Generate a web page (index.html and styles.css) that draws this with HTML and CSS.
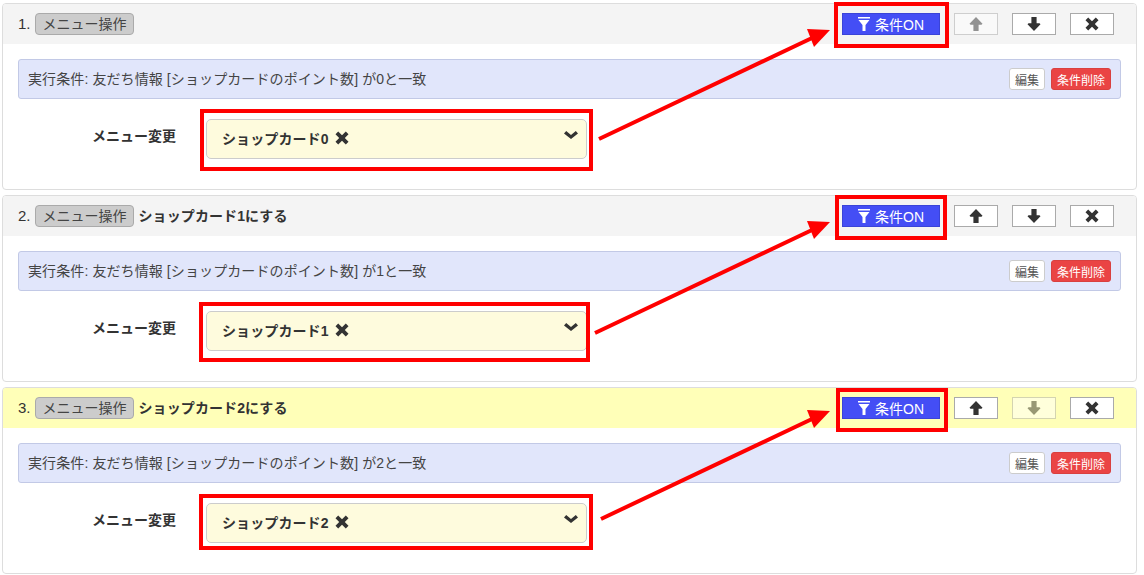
FILE: index.html
```html
<!DOCTYPE html>
<html lang="ja">
<head>
    <meta charset="UTF-8">
    <meta name="viewport" content="width=device-width, initial-scale=1.0">
    <title>アクション設定</title>
    <link rel="stylesheet" href="styles.css">
</head>
<body>
    <svg class="icon-defs" width="0" height="0">
        <symbol id="i-filter" viewBox="0 0 12 14"><path d="M0 0h12v1.500H0zM.5 3h11L7.500 8V14H4.500V8z"/></symbol>
        <symbol id="i-up" viewBox="0 0 14 14"><path d="M7 0l6.500 6.800-1 1H9.600V14H4.400V7.800H1.500l-1-1z"/></symbol>
        <symbol id="i-down" viewBox="0 0 14 14"><path d="M7 14L.5 7.200l1-1h2.900V0h5.200v6.200h2.900l1 1z"/></symbol>
        <symbol id="i-x" viewBox="0 0 14 14"><path d="M3.200 .5L7 4.200 10.800 .5 13.500 3.200 9.800 7 13.500 10.800 10.800 13.500 7 9.800 3.200 13.500 .5 10.800 4.200 7 .5 3.200z"/></symbol>
        <symbol id="i-chevron" viewBox="0 0 14 8"><path d="M2.200 0L7 4 11.800 0 14 2.400 7 8 0 2.400z"/></symbol>
    </svg>

    <div class="action-list">
        <section class="card">
            <header class="card-head">
                <div class="head-title">
                    <span class="head-no">1.</span>
                    <span class="badge">メニュー操作</span>
                </div>
                <div class="head-tools">
                    <button class="btn-cond"><svg class="ic ic-filter"><use href="#i-filter"/></svg><span class="cond-label">条件ON</span></button>
                    <button class="btn-tool" disabled><svg class="ic"><use href="#i-up"/></svg></button>
                    <button class="btn-tool"><svg class="ic"><use href="#i-down"/></svg></button>
                    <button class="btn-tool"><svg class="ic"><use href="#i-x"/></svg></button>
                </div>
            </header>
            <div class="card-body">
                <div class="cond-bar">
                    <span class="cond-text">実行条件: 友だち情報 [ショップカードのポイント数] が0と一致</span>
                    <div class="cond-tools">
                        <button class="btn-edit">編集</button>
                        <button class="btn-del">条件削除</button>
                    </div>
                </div>
                <div class="form-row">
                    <label class="form-label">メニュー変更</label>
                    <div class="select-box">
                        <span class="select-value">ショップカード0<svg class="ic ic-clear"><use href="#i-x"/></svg></span>
                        <svg class="ic-chevron"><use href="#i-chevron"/></svg>
                    </div>
                </div>
            </div>
        </section>

        <section class="card">
            <header class="card-head">
                <div class="head-title">
                    <span class="head-no">2.</span>
                    <span class="badge">メニュー操作</span>
                    <b class="head-name">ショップカード1にする</b>
                </div>
                <div class="head-tools">
                    <button class="btn-cond"><svg class="ic ic-filter"><use href="#i-filter"/></svg><span class="cond-label">条件ON</span></button>
                    <button class="btn-tool"><svg class="ic"><use href="#i-up"/></svg></button>
                    <button class="btn-tool"><svg class="ic"><use href="#i-down"/></svg></button>
                    <button class="btn-tool"><svg class="ic"><use href="#i-x"/></svg></button>
                </div>
            </header>
            <div class="card-body">
                <div class="cond-bar">
                    <span class="cond-text">実行条件: 友だち情報 [ショップカードのポイント数] が1と一致</span>
                    <div class="cond-tools">
                        <button class="btn-edit">編集</button>
                        <button class="btn-del">条件削除</button>
                    </div>
                </div>
                <div class="form-row">
                    <label class="form-label">メニュー変更</label>
                    <div class="select-box">
                        <span class="select-value">ショップカード1<svg class="ic ic-clear"><use href="#i-x"/></svg></span>
                        <svg class="ic-chevron"><use href="#i-chevron"/></svg>
                    </div>
                </div>
            </div>
        </section>

        <section class="card card-active">
            <header class="card-head">
                <div class="head-title">
                    <span class="head-no">3.</span>
                    <span class="badge">メニュー操作</span>
                    <b class="head-name">ショップカード2にする</b>
                </div>
                <div class="head-tools">
                    <button class="btn-cond"><svg class="ic ic-filter"><use href="#i-filter"/></svg><span class="cond-label">条件ON</span></button>
                    <button class="btn-tool"><svg class="ic"><use href="#i-up"/></svg></button>
                    <button class="btn-tool" disabled><svg class="ic"><use href="#i-down"/></svg></button>
                    <button class="btn-tool"><svg class="ic"><use href="#i-x"/></svg></button>
                </div>
            </header>
            <div class="card-body">
                <div class="cond-bar">
                    <span class="cond-text">実行条件: 友だち情報 [ショップカードのポイント数] が2と一致</span>
                    <div class="cond-tools">
                        <button class="btn-edit">編集</button>
                        <button class="btn-del">条件削除</button>
                    </div>
                </div>
                <div class="form-row">
                    <label class="form-label">メニュー変更</label>
                    <div class="select-box">
                        <span class="select-value">ショップカード2<svg class="ic ic-clear"><use href="#i-x"/></svg></span>
                        <svg class="ic-chevron"><use href="#i-chevron"/></svg>
                    </div>
                </div>
            </div>
        </section>
    </div>

    <!-- red annotations drawn on top of the screenshot -->
    <svg class="marks" width="1144" height="575" viewBox="0 0 1144 575">
        <g fill="none" stroke="#f00" stroke-width="4">
            <rect x="202" y="111" width="389" height="58"/>
            <rect x="836" y="4" width="111" height="42"/>
            <rect x="201" y="304" width="387" height="56"/>
            <rect x="837" y="197" width="108" height="41"/>
            <rect x="201" y="496" width="390" height="52"/>
            <rect x="838" y="390" width="108" height="40"/>
            <path d="M599 139L812 38M595 333L812 230M601 519L812 419"/>
        </g>
        <g fill="#f00">
            <path d="M830 30L807 29 L814 47z"/>
            <path d="M830 222L807 221 L814 239z"/>
            <path d="M830 411L807 410 L814 428z"/>
        </g>
    </svg>
</body>
</html>
```

FILE: styles.css
```css
* {
    box-sizing: border-box;
}

body {
    margin: 0;
    font-family: "Liberation Sans", "Noto Sans CJK JP", sans-serif;
    font-size: 14px;
    color: #333;
    background: #fff;
}

.icon-defs {
    position: absolute;
}

.marks {
    position: absolute;
    top: 0;
    left: 0;
    pointer-events: none;
}

.action-list {
    display: flex;
    flex-direction: column;
    gap: 5px;
    padding: 3px 7px 0 2px;
}

.card {
    height: 187px;
    border: 1px solid #ddd;
    border-radius: 4px;
    overflow: hidden;
    background: #fff;
}

.card-head {
    display: flex;
    justify-content: space-between;
    align-items: center;
    height: 40px;
    padding: 0 22px 0 15px;
    background: #f4f4f4;
}

.card-active .card-head {
    background: #ffffb8;
}

.head-title {
    display: flex;
    align-items: center;
    gap: 4px;
    margin-top: -1px;
}

.head-no {
    font-size: 15px;
}

.head-name {
    margin: -2px 0 0 1px;
    letter-spacing: 0.1px;
}

.badge {
    padding: 0 6px 0 7px;
    height: 22px;
    line-height: 20px;
    border: 1px solid #aaa;
    border-radius: 4px;
    background: #ccc;
    color: #444;
}

.head-tools {
    display: flex;
    gap: 14px;
}

button {
    font-family: inherit;
    padding: 0;
}

.btn-cond {
    display: flex;
    justify-content: center;
    align-items: center;
    gap: 5px;
    width: 98px;
    height: 22px;
    border: 1px solid #3a44d8;
    background: #444ef5;
    color: #fff;
    font-size: 14px;
}

.cond-label {
    margin-top: -1px;
}

.btn-tool {
    display: flex;
    justify-content: center;
    align-items: center;
    width: 44px;
    height: 22px;
    border: 1px solid #aaa;
    background: #fff;
    color: #333;
}

.btn-tool:disabled {
    opacity: 0.5;
}

.ic {
    width: 14px;
    height: 14px;
    fill: currentColor;
}

.ic-filter {
    width: 12px;
    height: 14px;
}

.card-body {
    padding: 15px 15px 0;
}

.cond-bar {
    display: flex;
    justify-content: space-between;
    align-items: center;
    height: 40px;
    padding: 0 9px;
    border: 1px solid #c2c9e6;
    border-radius: 3px;
    background: #e1e6fb;
    color: #444;
}

.cond-text {
    margin-top: -3px;
    letter-spacing: 0.1px;
}

.cond-tools {
    display: flex;
    gap: 6px;
}

.btn-edit,
.btn-del {
    height: 22px;
    border-radius: 3px;
    font-size: 12px;
}

.btn-edit {
    width: 36px;
    border: 1px solid #ccc;
    background: #fff;
    color: #555;
}

.btn-del {
    width: 60px;
    border: 1px solid #d9403f;
    background: #ea4444;
    color: #fff;
}

.form-row {
    display: flex;
    margin-top: 20px;
}

.form-label {
    width: 158px;
    padding-top: 6px;
    text-align: right;
    font-weight: bold;
}

.select-box {
    display: flex;
    justify-content: space-between;
    width: 381px;
    height: 40px;
    margin-left: 30px;
    padding: 0 8px 0 15px;
    border: 1px solid #ccc;
    border-radius: 5px;
    background: #fefbdd;
}

.select-value {
    display: flex;
    align-items: center;
    gap: 6px;
    padding-bottom: 3px;
    font-weight: bold;
    letter-spacing: 0.1px;
}

.ic-clear {
    width: 14px;
    height: 14px;
    margin-top: 1px;
}

.ic-chevron {
    width: 14px;
    height: 8px;
    margin-top: 11px;
    fill: #333;
}
```
